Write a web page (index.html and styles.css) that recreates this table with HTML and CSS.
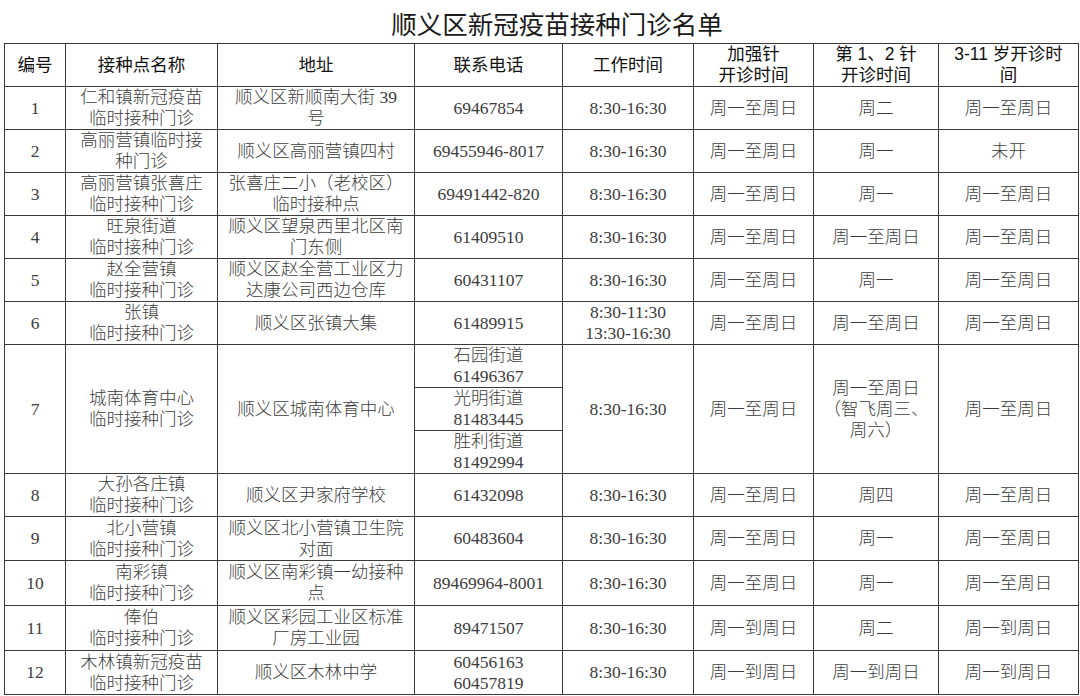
FILE: index.html
```html
<!DOCTYPE html>
<html lang="zh-CN">
<head>
<meta charset="utf-8">
<title>顺义区新冠疫苗接种门诊名单</title>
<link rel="stylesheet" href="styles.css">
</head>
<body>
<div class="page">
  <h1 class="title">顺义区新冠疫苗接种门诊名单</h1>
  <table class="list">
    <colgroup>
      <col class="c-no"><col class="c-name"><col class="c-addr"><col class="c-tel"><col class="c-time"><col class="c-boost"><col class="c-first"><col class="c-kids">
    </colgroup>
    <thead>
      <tr class="r-head">
        <th>编号</th><th>接种点名称</th><th>地址</th><th>联系电话</th><th>工作时间</th><th>加强针<br>开诊时间</th><th>第 1、2 针<br>开诊时间</th><th>3-11 岁开诊时<br>间</th>
      </tr>
    </thead>
    <tbody>
      <tr class="r43"><td>1</td><td>仁和镇新冠疫苗<br>临时接种门诊</td><td>顺义区新顺南大街 39<br>号</td><td>69467854</td><td>8:30-16:30</td><td>周一至周日</td><td>周二</td><td>周一至周日</td></tr>
      <tr class="r43"><td>2</td><td>高丽营镇临时接<br>种门诊</td><td>顺义区高丽营镇四村</td><td>69455946-8017</td><td>8:30-16:30</td><td>周一至周日</td><td>周一</td><td>未开</td></tr>
      <tr class="r43"><td>3</td><td>高丽营镇张喜庄<br>临时接种门诊</td><td>张喜庄二小（老校区）<br>临时接种点</td><td>69491442-820</td><td>8:30-16:30</td><td>周一至周日</td><td>周一</td><td>周一至周日</td></tr>
      <tr class="r43"><td>4</td><td>旺泉街道<br>临时接种门诊</td><td>顺义区望泉西里北区南<br>门东侧</td><td>61409510</td><td>8:30-16:30</td><td>周一至周日</td><td>周一至周日</td><td>周一至周日</td></tr>
      <tr class="r43"><td>5</td><td>赵全营镇<br>临时接种门诊</td><td>顺义区赵全营工业区力<br>达康公司西边仓库</td><td>60431107</td><td>8:30-16:30</td><td>周一至周日</td><td>周一</td><td>周一至周日</td></tr>
      <tr class="r43"><td>6</td><td>张镇<br>临时接种门诊</td><td>顺义区张镇大集</td><td>61489915</td><td>8:30-11:30<br>13:30-16:30</td><td>周一至周日</td><td>周一至周日</td><td>周一至周日</td></tr>
      <tr class="r42"><td rowspan="3">7</td><td rowspan="3">城南体育中心<br>临时接种门诊</td><td rowspan="3">顺义区城南体育中心</td><td>石园街道<br>61496367</td><td rowspan="3">8:30-16:30</td><td rowspan="3">周一至周日</td><td rowspan="3">周一至周日<br>（智飞周三、<br>周六）</td><td rowspan="3">周一至周日</td></tr>
      <tr class="r43"><td>光明街道<br>81483445</td></tr>
      <tr class="r43"><td>胜利街道<br>81492994</td></tr>
      <tr class="r43"><td>8</td><td>大孙各庄镇<br>临时接种门诊</td><td>顺义区尹家府学校</td><td>61432098</td><td>8:30-16:30</td><td>周一至周日</td><td>周四</td><td>周一至周日</td></tr>
      <tr class="r44"><td>9</td><td>北小营镇<br>临时接种门诊</td><td>顺义区北小营镇卫生院<br>对面</td><td>60483604</td><td>8:30-16:30</td><td>周一至周日</td><td>周一</td><td>周一至周日</td></tr>
      <tr class="r45"><td>10</td><td>南彩镇<br>临时接种门诊</td><td>顺义区南彩镇一幼接种<br>点</td><td>89469964-8001</td><td>8:30-16:30</td><td>周一至周日</td><td>周一</td><td>周一至周日</td></tr>
      <tr class="r45"><td>11</td><td>俸伯<br>临时接种门诊</td><td>顺义区彩园工业区标准<br>厂房工业园</td><td>89471507</td><td>8:30-16:30</td><td>周一到周日</td><td>周二</td><td>周一到周日</td></tr>
      <tr class="r44"><td>12</td><td>木林镇新冠疫苗<br>临时接种门诊</td><td>顺义区木林中学</td><td>60456163<br>60457819</td><td>8:30-16:30</td><td>周一到周日</td><td>周一到周日</td><td>周一到周日</td></tr>
    </tbody>
  </table>
</div>
</body>
</html>
```

FILE: styles.css
```css
html, body {
  margin: 0;
  padding: 0;
  background: #ffffff;
}

.page {
  width: 1080px;
  height: 696px;
  overflow: hidden;
  background: #ffffff;
}

.title {
  margin: 0;
  height: 43px;
  padding-left: 34px;
  box-sizing: border-box;
  text-align: center;
  font-family: "Noto Sans CJK SC", "Noto Sans", sans-serif;
  font-weight: 400;
  font-size: 25.5px;
  line-height: 46px;
  color: #1a1a1a;
}

.list {
  border-collapse: collapse;
  table-layout: fixed;
  width: 1075px;
  margin-left: 4px;
  border: 1px solid #333333;
}

.c-no { width: 61px; }
.c-name { width: 152px; }
.c-addr { width: 197px; }
.c-tel { width: 148px; }
.c-time { width: 131px; }
.c-boost { width: 120px; }
.c-first { width: 125px; }
.c-kids { width: 140px; }

.list th,
.list td {
  border: 1px solid #3a3a3a;
  padding: 0;
  text-align: center;
  vertical-align: middle;
  white-space: nowrap;
  overflow: hidden;
}

.list th {
  font-family: "Liberation Sans", "Noto Sans CJK SC", sans-serif;
  font-weight: 400;
  font-size: 17.5px;
  line-height: 21px;
  color: #111111;
}

.list td {
  font-family: "Liberation Serif", "Noto Sans CJK SC", serif;
  font-weight: 300;
  font-size: 17.5px;
  line-height: 21px;
  color: #3c3c3c;
}

.r-head { height: 43px; }
.r42 { height: 42px; }
.r43 { height: 43px; }
.r44 { height: 44px; }
.r45 { height: 45px; }
```
